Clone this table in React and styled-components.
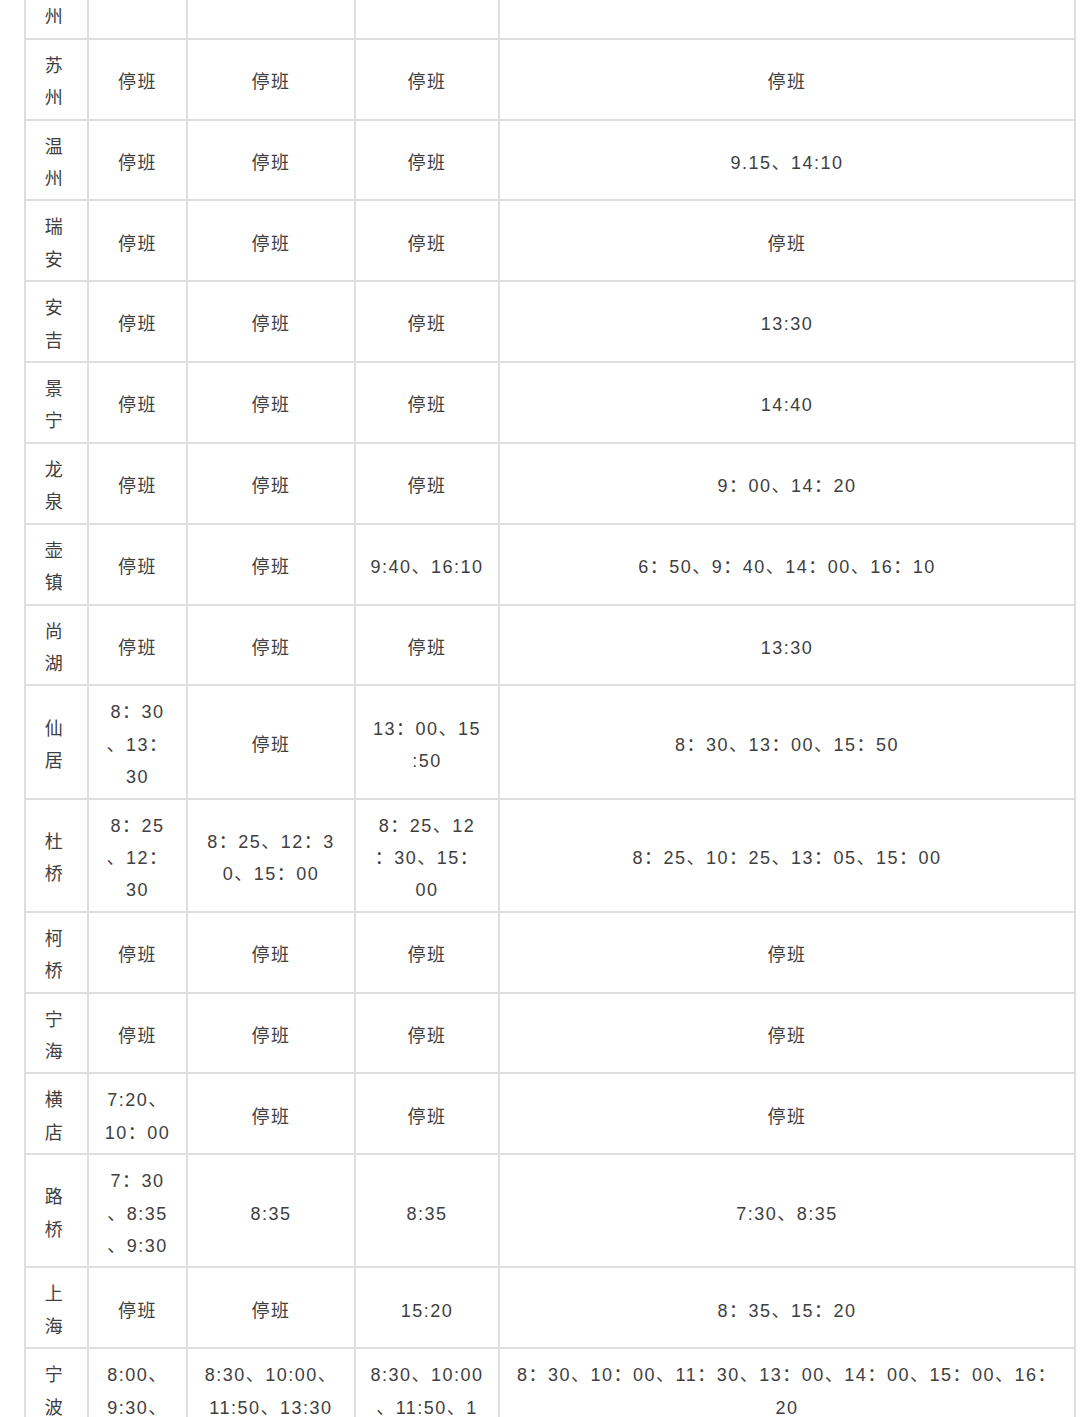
import React from "react";
import styled, { createGlobalStyle } from "styled-components";

const GlobalStyle = createGlobalStyle`
  html, body {
    margin: 0;
    padding: 0;
    background: #fff;
  }
  body {
    font-family: "Liberation Sans", "Noto Sans CJK SC", sans-serif;
    color: #3f3f3f;
  }
`;

const rows = [
  ["杭\n州", "", "", "", ""],
  ["苏\n州", "停班", "停班", "停班", "停班"],
  ["温\n州", "停班", "停班", "停班", "9.15、14:10"],
  ["瑞\n安", "停班", "停班", "停班", "停班"],
  ["安\n吉", "停班", "停班", "停班", "13:30"],
  ["景\n宁", "停班", "停班", "停班", "14:40"],
  ["龙\n泉", "停班", "停班", "停班", "9：00、14：20"],
  ["壶\n镇", "停班", "停班", "9:40、16:10", "6：50、9：40、14：00、16：10"],
  ["尚\n湖", "停班", "停班", "停班", "13:30"],
  ["仙\n居", "8：30\n、13：\n30", "停班", "13：00、15\n:50", "8：30、13：00、15：50"],
  [
    "杜\n桥",
    "8：25\n、12：\n30",
    "8：25、12：3\n0、15：00",
    "8：25、12\n：30、15：\n00",
    "8：25、10：25、13：05、15：00",
  ],
  ["柯\n桥", "停班", "停班", "停班", "停班"],
  ["宁\n海", "停班", "停班", "停班", "停班"],
  ["横\n店", "7:20、\n10：00", "停班", "停班", "停班"],
  ["路\n桥", "7：30\n、8:35\n、9:30", "8:35", "8:35", "7:30、8:35"],
  ["上\n海", "停班", "停班", "15:20", "8：35、15：20"],
  [
    "宁\n波",
    "8:00、\n9:30、\n11:00",
    "8:30、10:00、\n11:50、13:30\n、15:00",
    "8:30、10:00\n、11:50、1\n3:30",
    "8：30、10：00、11：30、13：00、14：00、15：00、16：\n20",
  ],
];

const colWidths = [63, 99, 168, 144, 576];

function App() {
  return (
    <>
      <GlobalStyle />
      <Page>
        <Table>
          <colgroup>
            {colWidths.map((w, i) => (
              <col key={i} style={{ width: w }} />
            ))}
          </colgroup>
          <tbody>
            {rows.map((row, r) => (
              <tr key={r}>
                {row.map((cell, c) => (
                  <Cell key={c} $city={c === 0} $top={r === rows.length - 1}>
                    {cell}
                  </Cell>
                ))}
              </tr>
            ))}
          </tbody>
        </Table>
      </Page>
    </>
  );
}

const Page = styled.div`
  padding: 0 4px 0 24px;
  margin-top: -43px;
`;

const Table = styled.table`
  border-collapse: collapse;
  table-layout: fixed;
  width: 1052px;
`;

const Cell = styled.td`
  border: 2px solid #dedede;
  padding: ${({ $city }) => ($city ? "10px 14px 4px 10px" : "10px 6px 4px")};
  font-size: 18px;
  line-height: 32.4px;
  letter-spacing: 1.5px;
  text-align: center;
  vertical-align: ${({ $top }) => ($top ? "top" : "middle")};
  white-space: pre-line;
  color: #404040;
`;

export default App;
